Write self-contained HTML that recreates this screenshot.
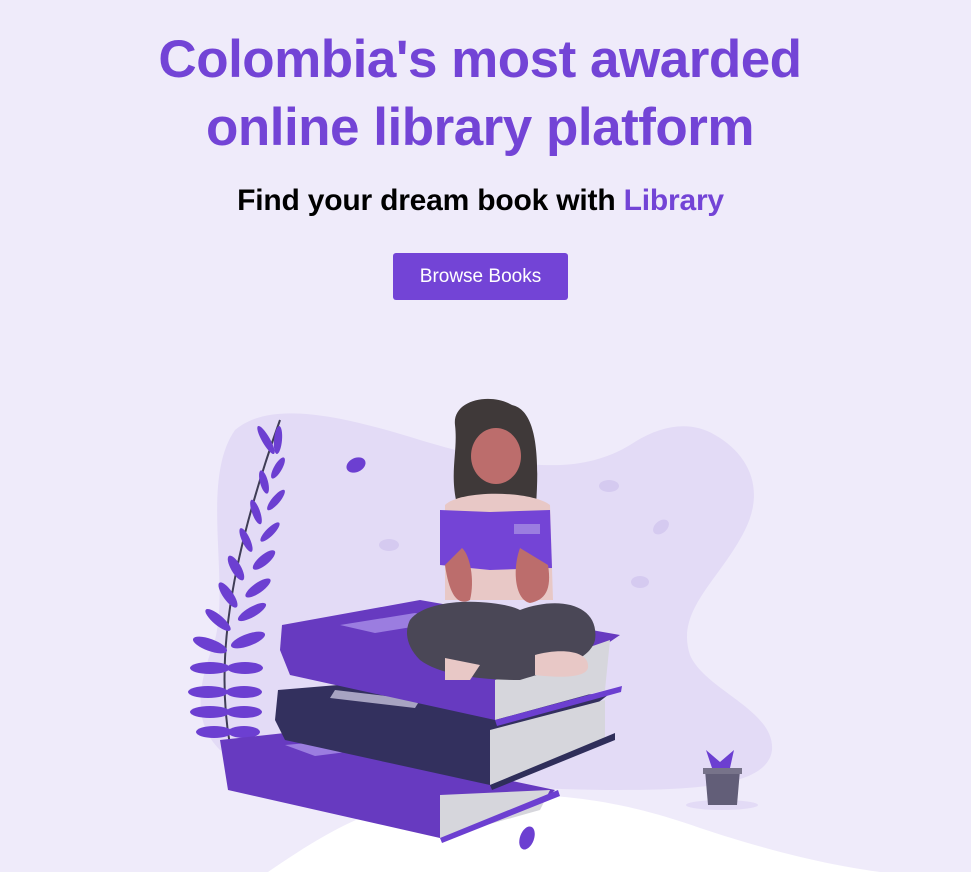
<!DOCTYPE html>
<html><head><meta charset="utf-8"><style>
html,body{margin:0;padding:0;width:971px;height:872px;overflow:hidden;background:#efebfa;font-family:"Liberation Sans",sans-serif}
h1{position:absolute;left:0;width:960px;top:26px;margin:0;text-align:center;color:#7344d6;font-size:53px;line-height:68px;font-weight:bold;letter-spacing:-0.5px}
h2{position:absolute;left:0;width:961px;top:184px;margin:0;text-align:center;color:#000;font-size:30px;font-weight:bold;letter-spacing:-0.2px}
h2 span{color:#7344d6}
.btn{position:absolute;left:393px;top:253px;width:175px;height:47px;background:#7344d6;border-radius:3px;color:#fff;font-size:19px;line-height:47px;text-align:center}
svg{position:absolute;left:0;top:0}
</style></head><body>
<svg width="971" height="872" viewBox="0 0 971 872">
<path d="M235 430 C270 400 340 415 420 440 C520 470 580 475 630 445 C660 425 690 420 715 435 C750 455 765 490 745 530 C720 580 675 610 690 655 C705 690 775 710 772 750 C768 785 700 790 620 790 C480 790 300 770 220 750 C190 720 200 680 215 640 C230 580 200 480 235 430Z" fill="#e3dbf6"/>
<path d="M268 872 C330 830 380 798 470 795 C560 792 620 800 700 828 C790 858 850 868 880 872Z" fill="#fff"/>
<ellipse cx="722" cy="805" rx="36" ry="5" fill="#e3dbf6"/>
<!-- plant -->
<path d="M230 745 C215 660 230 560 280 420" stroke="#3f3d56" stroke-width="2" fill="none"/>
<g fill="#6c3fd1">
<ellipse cx="210" cy="668" rx="20" ry="6"/><ellipse cx="245" cy="668" rx="18" ry="6"/>
<ellipse cx="208" cy="692" rx="20" ry="6"/><ellipse cx="244" cy="692" rx="18" ry="6"/>
<ellipse cx="210" cy="712" rx="20" ry="6"/><ellipse cx="244" cy="712" rx="18" ry="6"/>
<ellipse cx="214" cy="732" rx="18" ry="6"/><ellipse cx="244" cy="732" rx="16" ry="6"/>
<ellipse cx="210" cy="645" rx="18" ry="6" transform="rotate(20 210 645)"/><ellipse cx="248" cy="640" rx="18" ry="6" transform="rotate(-20 248 640)"/>
<ellipse cx="218" cy="620" rx="16" ry="5" transform="rotate(40 218 620)"/><ellipse cx="252" cy="612" rx="16" ry="5" transform="rotate(-30 252 612)"/>
<ellipse cx="228" cy="595" rx="15" ry="5" transform="rotate(55 228 595)"/><ellipse cx="258" cy="588" rx="15" ry="5" transform="rotate(-35 258 588)"/>
<ellipse cx="236" cy="568" rx="14" ry="5" transform="rotate(60 236 568)"/><ellipse cx="264" cy="560" rx="14" ry="5" transform="rotate(-40 264 560)"/>
<ellipse cx="246" cy="540" rx="13" ry="4" transform="rotate(65 246 540)"/><ellipse cx="270" cy="532" rx="13" ry="4" transform="rotate(-45 270 532)"/>
<ellipse cx="256" cy="512" rx="13" ry="4" transform="rotate(70 256 512)"/><ellipse cx="276" cy="500" rx="13" ry="4" transform="rotate(-50 276 500)"/>
<ellipse cx="264" cy="482" rx="12" ry="4" transform="rotate(75 264 482)"/><ellipse cx="278" cy="468" rx="12" ry="4" transform="rotate(-60 278 468)"/>
<ellipse cx="266" cy="440" rx="16" ry="4" transform="rotate(60 266 440)"/><ellipse cx="278" cy="440" rx="14" ry="4" transform="rotate(-85 278 440)"/>
</g>
<!-- bottom book -->
<path d="M220 740 L285 733 L555 790 L545 800 L440 838 L228 790Z" fill="#673ac0"/>
<path d="M440 795 L550 790 L540 810 L440 838Z" fill="#d6d6dc"/>
<path d="M440 838 L558 790 L560 796 L442 843Z" fill="#6c3fd1"/>
<path d="M285 745 L330 741 L362 750 L315 756Z" fill="#9b7de0"/>
<!-- middle book -->
<path d="M278 690 L350 684 L608 695 L490 785 L285 740 L275 720Z" fill="#33305e"/>
<path d="M490 730 L605 700 L605 740 L490 785Z" fill="#d6d6dc"/>
<path d="M490 785 L615 733 L615 740 L492 790Z" fill="#2f2e5a"/>
<path d="M335 690 L420 700 L415 708 L330 698Z" fill="#a7a3c2"/>
<!-- top book -->
<path d="M282 625 L420 600 L620 635 L495 720 L290 675 L280 650Z" fill="#673ac0"/>
<path d="M495 680 L610 640 L605 690 L495 720Z" fill="#d6d6dc"/>
<path d="M495 720 L622 686 L621 692 L497 726Z" fill="#6c3fd1"/>
<path d="M340 625 L415 613 L455 620 L375 633Z" fill="#9b7de0"/>
<!-- person -->
<path d="M455 425 C452 400 490 392 512 405 C535 410 540 450 536 505 L470 505 L456 500 C450 470 458 450 455 425Z" fill="#3f3939"/>
<ellipse cx="496" cy="456" rx="25" ry="28" fill="#bc6d6c"/>
<path d="M445 505 C460 490 530 490 550 505 L553 600 L445 600Z" fill="#e8c8c6"/>
<path d="M440 510 L490 512 L490 570 L440 565Z" fill="#7444d6"/>
<path d="M490 512 L550 510 L552 568 L490 570Z" fill="#7444d6"/>
<rect x="514" y="524" width="26" height="10" fill="#9b7de0"/>
<path d="M445 565 C450 600 460 605 470 600 C475 580 470 555 462 548Z" fill="#bc6d6c"/>
<path d="M520 548 C512 570 515 600 530 603 C545 600 552 590 548 565Z" fill="#bc6d6c"/>
<path d="M410 620 C430 595 500 600 520 610 C560 595 600 605 595 640 C590 660 560 668 520 680 C480 680 440 675 420 660 C405 645 405 630 410 620Z" fill="#4a4756"/>
<path d="M445 658 L480 665 L470 680 L445 680Z" fill="#e8c8c6"/>
<path d="M535 655 C560 648 590 650 588 668 C585 678 560 678 535 675Z" fill="#e8c8c6"/>
<!-- floating leaves -->
<ellipse cx="356" cy="465" rx="10" ry="7" fill="#6c3fd1" transform="rotate(-25 356 465)"/>
<ellipse cx="527" cy="838" rx="7" ry="12" fill="#6c3fd1" transform="rotate(20 527 838)"/>
<g fill="#d5caf0"><ellipse cx="609" cy="486" rx="10" ry="6"/><ellipse cx="389" cy="545" rx="10" ry="6"/><ellipse cx="661" cy="527" rx="9" ry="6" transform="rotate(-40 661 527)"/><ellipse cx="640" cy="582" rx="9" ry="6"/></g>
<!-- pot -->
<path d="M705 770 L740 770 L737 805 L708 805Z" fill="#625e78"/>
<rect x="703" y="768" width="39" height="6" fill="#77738a"/>
<path d="M712 768 L706 750 L720 762 L734 750 L730 768Z" fill="#6c3fd1"/>
</svg>
<h1>Colombia's most awarded<br>online library platform</h1>
<h2>Find your dream book with <span>Library</span></h2>
<div class="btn">Browse Books</div>
</body></html>
